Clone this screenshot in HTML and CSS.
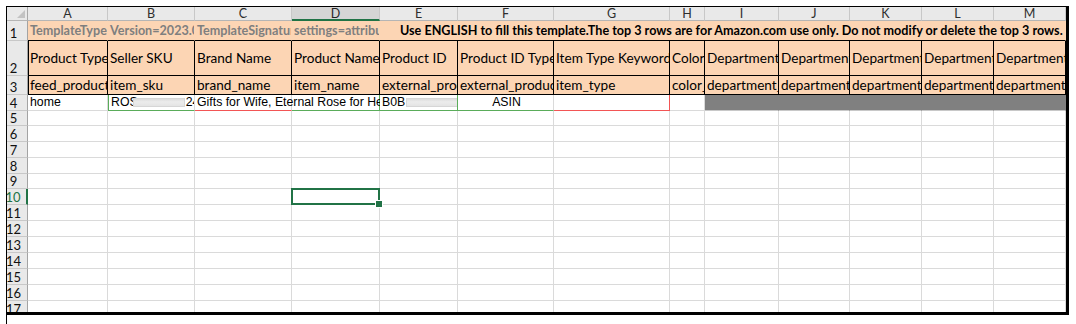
FILE: index.html
```html
<!DOCTYPE html>
<html lang="en">
<head>
    <meta charset="UTF-8">
    <title>Inventory Template</title>
    <link rel="stylesheet" href="styles.css">
</head>
<body>
    <div class="page">
        <div class="sheet">
            <!-- column letters -->
            <div class="row hdr">
                <div class="corner"><svg width="8" height="8" viewBox="0 0 8 8"><path d="M8 0 L8 8 L0 8 Z" fill="#c3c3c3"/></svg></div>
                <div>A</div><div>B</div><div>C</div><div class="sel-col">D</div><div>E</div><div>F</div><div>G</div><div>H</div><div>I</div><div>J</div><div>K</div><div>L</div><div>M</div>
            </div>

            <div class="row r1">
                <div class="rh">1</div>
                <div class="meta">TemplateType=fptcustom</div>
                <div class="meta">Version=2023.0829</div>
                <div class="meta">TemplateSignature=SE9NRQ==</div>
                <div class="meta">settings=attributeRow=3&amp;contentLanguageTag=en_US</div>
                <div class="notice">Use ENGLISH to fill this template.The top 3 rows are for Amazon.com use only. Do not modify or delete the top 3 rows.</div>
            </div>

            <div class="row r2 labels">
                <div class="rh">2</div>
                <div>Product Type</div>
                <div>Seller SKU</div>
                <div>Brand Name</div>
                <div>Product Name</div>
                <div>Product ID</div>
                <div>Product ID Type</div>
                <div>Item Type Keyword</div>
                <div>Color</div>
                <div>Department Name</div>
                <div>Department Name</div>
                <div>Department Name</div>
                <div>Department Name</div>
                <div>Department Name</div>
            </div>

            <div class="row r3 labels">
                <div class="rh">3</div>
                <div>feed_product_type</div>
                <div>item_sku</div>
                <div>brand_name</div>
                <div>item_name</div>
                <div>external_product_id</div>
                <div>external_product_id_type</div>
                <div>item_type</div>
                <div>color_name</div>
                <div>department_name</div>
                <div>department_name</div>
                <div>department_name</div>
                <div>department_name</div>
                <div>department_name</div>
            </div>

            <div class="row r4 data">
                <div class="rh">4</div>
                <div>home</div>
                <div class="ok-left ok-bottom">ROS<span class="redact sku"></span>24</div>
                <div class="spill-cell bad-bottom"><span class="spill">Gifts for Wife, Eternal Rose for Her Valentines Day</span></div>
                <div class="ok-bottom ok-right"></div>
                <div class="ok-bottom ok-right flush">B0B<span class="redact asin"></span>W</div>
                <div class="ok-bottom center">ASIN</div>
                <div class="bad-bottom bad-right"></div>
                <div></div>
                <div class="fill"></div><div class="fill"></div><div class="fill"></div><div class="fill"></div><div class="fill"></div>
            </div>

            <div class="row h15"><div class="rh">5</div><div></div><div></div><div></div><div></div><div></div><div></div><div></div><div></div><div></div><div></div><div></div><div></div><div></div></div>
            <div class="row"><div class="rh">6</div><div></div><div></div><div></div><div></div><div></div><div></div><div></div><div></div><div></div><div></div><div></div><div></div><div></div></div>
            <div class="row"><div class="rh">7</div><div></div><div></div><div></div><div></div><div></div><div></div><div></div><div></div><div></div><div></div><div></div><div></div><div></div></div>
            <div class="row"><div class="rh">8</div><div></div><div></div><div></div><div></div><div></div><div></div><div></div><div></div><div></div><div></div><div></div><div></div><div></div></div>
            <div class="row h15"><div class="rh">9</div><div></div><div></div><div></div><div></div><div></div><div></div><div></div><div></div><div></div><div></div><div></div><div></div><div></div></div>
            <div class="row"><div class="rh sel-row">10</div><div></div><div></div><div></div><div class="active"></div><div></div><div></div><div></div><div></div><div></div><div></div><div></div><div></div><div></div></div>
            <div class="row"><div class="rh">11</div><div></div><div></div><div></div><div></div><div></div><div></div><div></div><div></div><div></div><div></div><div></div><div></div><div></div></div>
            <div class="row"><div class="rh">12</div><div></div><div></div><div></div><div></div><div></div><div></div><div></div><div></div><div></div><div></div><div></div><div></div><div></div></div>
            <div class="row"><div class="rh">13</div><div></div><div></div><div></div><div></div><div></div><div></div><div></div><div></div><div></div><div></div><div></div><div></div><div></div></div>
            <div class="row"><div class="rh">14</div><div></div><div></div><div></div><div></div><div></div><div></div><div></div><div></div><div></div><div></div><div></div><div></div><div></div></div>
            <div class="row"><div class="rh">15</div><div></div><div></div><div></div><div></div><div></div><div></div><div></div><div></div><div></div><div></div><div></div><div></div><div></div></div>
            <div class="row"><div class="rh">16</div><div></div><div></div><div></div><div></div><div></div><div></div><div></div><div></div><div></div><div></div><div></div><div></div><div></div></div>
            <div class="row"><div class="rh">17</div><div></div><div></div><div></div><div></div><div></div><div></div><div></div><div></div><div></div><div></div><div></div><div></div><div></div></div>
        </div>
    </div>
</body>
</html>
```

FILE: styles.css
```css
:root {
    --cols: 21px 80px 87px 97px 88px 78px 96px 116px 35px 74px 71px 72px 72px 72px;
    --peach: #fcd5b4;
    --grid: #dadada;
    --head-bg: #e9e9e9;
    --excel-green: #217346;
    --ok: #5aac5a;
    --bad: #f25555;
}

* {
    margin: 0;
    padding: 0;
    box-sizing: border-box;
}

body {
    background: #ffffff;
    font-family: 'Lato', 'Liberation Sans', sans-serif;
}

/* outer frame of the screenshot */
.page {
    margin: 6px 0 0 6px;
    height: 318px;
    border-left: 1px solid #000;
}

.sheet {
    width: 1062px;
    height: 309px;
    border-top: 1px solid #000;
    border-right: 3px solid #000;
    border-bottom: 3px solid #000;
    overflow: hidden;
}

.row {
    display: grid;
    grid-template-columns: var(--cols);
    height: 16px;
}

.row > div {
    border-right: 1px solid var(--grid);
    border-bottom: 1px solid var(--grid);
    overflow: hidden;
    white-space: nowrap;
    position: relative;
}

.h15 { height: 15px; }

/* column letters */
.hdr {
    height: 14px;
}

.hdr > div {
    background: var(--head-bg);
    border-right-color: #c8c8c8;
    border-bottom-color: #b5b5b5;
    text-align: center;
    font-size: 12.5px;
    line-height: 13px;
    color: #2e2e2e;
}

.hdr .corner {
    display: flex;
    justify-content: flex-end;
    align-items: flex-end;
    padding: 0 2px 2px 0;
    border-right-color: #a8a8a8;
}

.hdr .sel-col {
    background: #d5d5d5;
    border-bottom: 2px solid var(--excel-green);
    color: #262626;
}

/* row numbers */
.row > .rh {
    background: var(--head-bg);
    border-right-color: #a3a3a3;
    border-bottom-color: #c8c8c8;
    display: flex;
    align-items: flex-end;
    justify-content: center;
    padding-right: 7px;
    font-size: 13px;
    line-height: 14px;
    color: #111;
}

.row > .sel-row {
    color: var(--excel-green);
    border-right: 2px solid var(--excel-green);
}

/* row 1 - template notice */
.r1 {
    height: 20px;
}

.r1 > div:not(.rh) {
    background: var(--peach);
    border-right-color: var(--peach);
    border-bottom-color: #000;
    display: flex;
    align-items: center;
    font-size: 12.6px;
    font-weight: bold;
    padding-left: 2px;
}

.r1 .meta {
    color: #7f7f7f;
}

.r1 > div.notice {
    grid-column: span 9;
    color: #000;
    padding-left: 20px;
}

/* rows 2 and 3 - field labels */
.r2 { height: 35px; }
.r3 { height: 19px; }

.labels > div:not(.rh) {
    background: var(--peach);
    border-right-color: #000;
    border-bottom-color: #000;
    display: flex;
    align-items: center;
    padding-left: 2px;
    font-size: 13.6px;
    color: #000;
}

.labels > div:nth-child(2) {
    border-left: 1px solid #000;
    padding-left: 1px;
}

/* row 4 - product data */
.data > div:not(.rh) {
    font-family: 'Liberation Sans', Arial, sans-serif;
    font-size: 12.3px;
    line-height: 15px;
    padding-left: 2px;
    color: #000;
}

.data > .flush {
    padding-left: 0;
}

.data .center {
    text-align: center;
}

.redact {
    display: inline-block;
    height: 9px;
    vertical-align: -1px;
    background: linear-gradient(#dcdcdc, #ececec 40%, #e4e4e4);
    border: 1px solid #d6d6d6;
    position: relative;
}

.redact.sku { width: 52px; margin: 0 1px 0 -5px; }
.redact.asin { width: 53px; margin: 0 1px 0 1px; }

.row > .spill-cell {
    overflow: visible;
    z-index: 1;
}

.spill {
    display: block;
    width: 183px;
    overflow: hidden;
}

.row > .ok-left { border-left: 1px solid var(--ok); padding-left: 1px; }
.row > .ok-bottom { border-bottom-color: var(--ok); }
.row > .ok-right { border-right-color: var(--ok); }
.row > .bad-bottom { border-bottom-color: var(--bad); }
.row > .bad-right { border-right-color: var(--bad); }

.row > .fill {
    background: #808080;
    border-right-color: #808080;
    border-bottom-color: #c8c8c8;
}

/* active cell D10 */
.row > .active {
    overflow: visible;
    z-index: 2;
}

.active::before {
    content: "";
    position: absolute;
    top: -1px;
    left: -1px;
    right: -1px;
    bottom: -1px;
    border: 2px solid var(--excel-green);
}

.active::after {
    content: "";
    position: absolute;
    right: -4px;
    bottom: -4px;
    width: 6px;
    height: 6px;
    background: var(--excel-green);
    border: 1px solid #fff;
}
```
